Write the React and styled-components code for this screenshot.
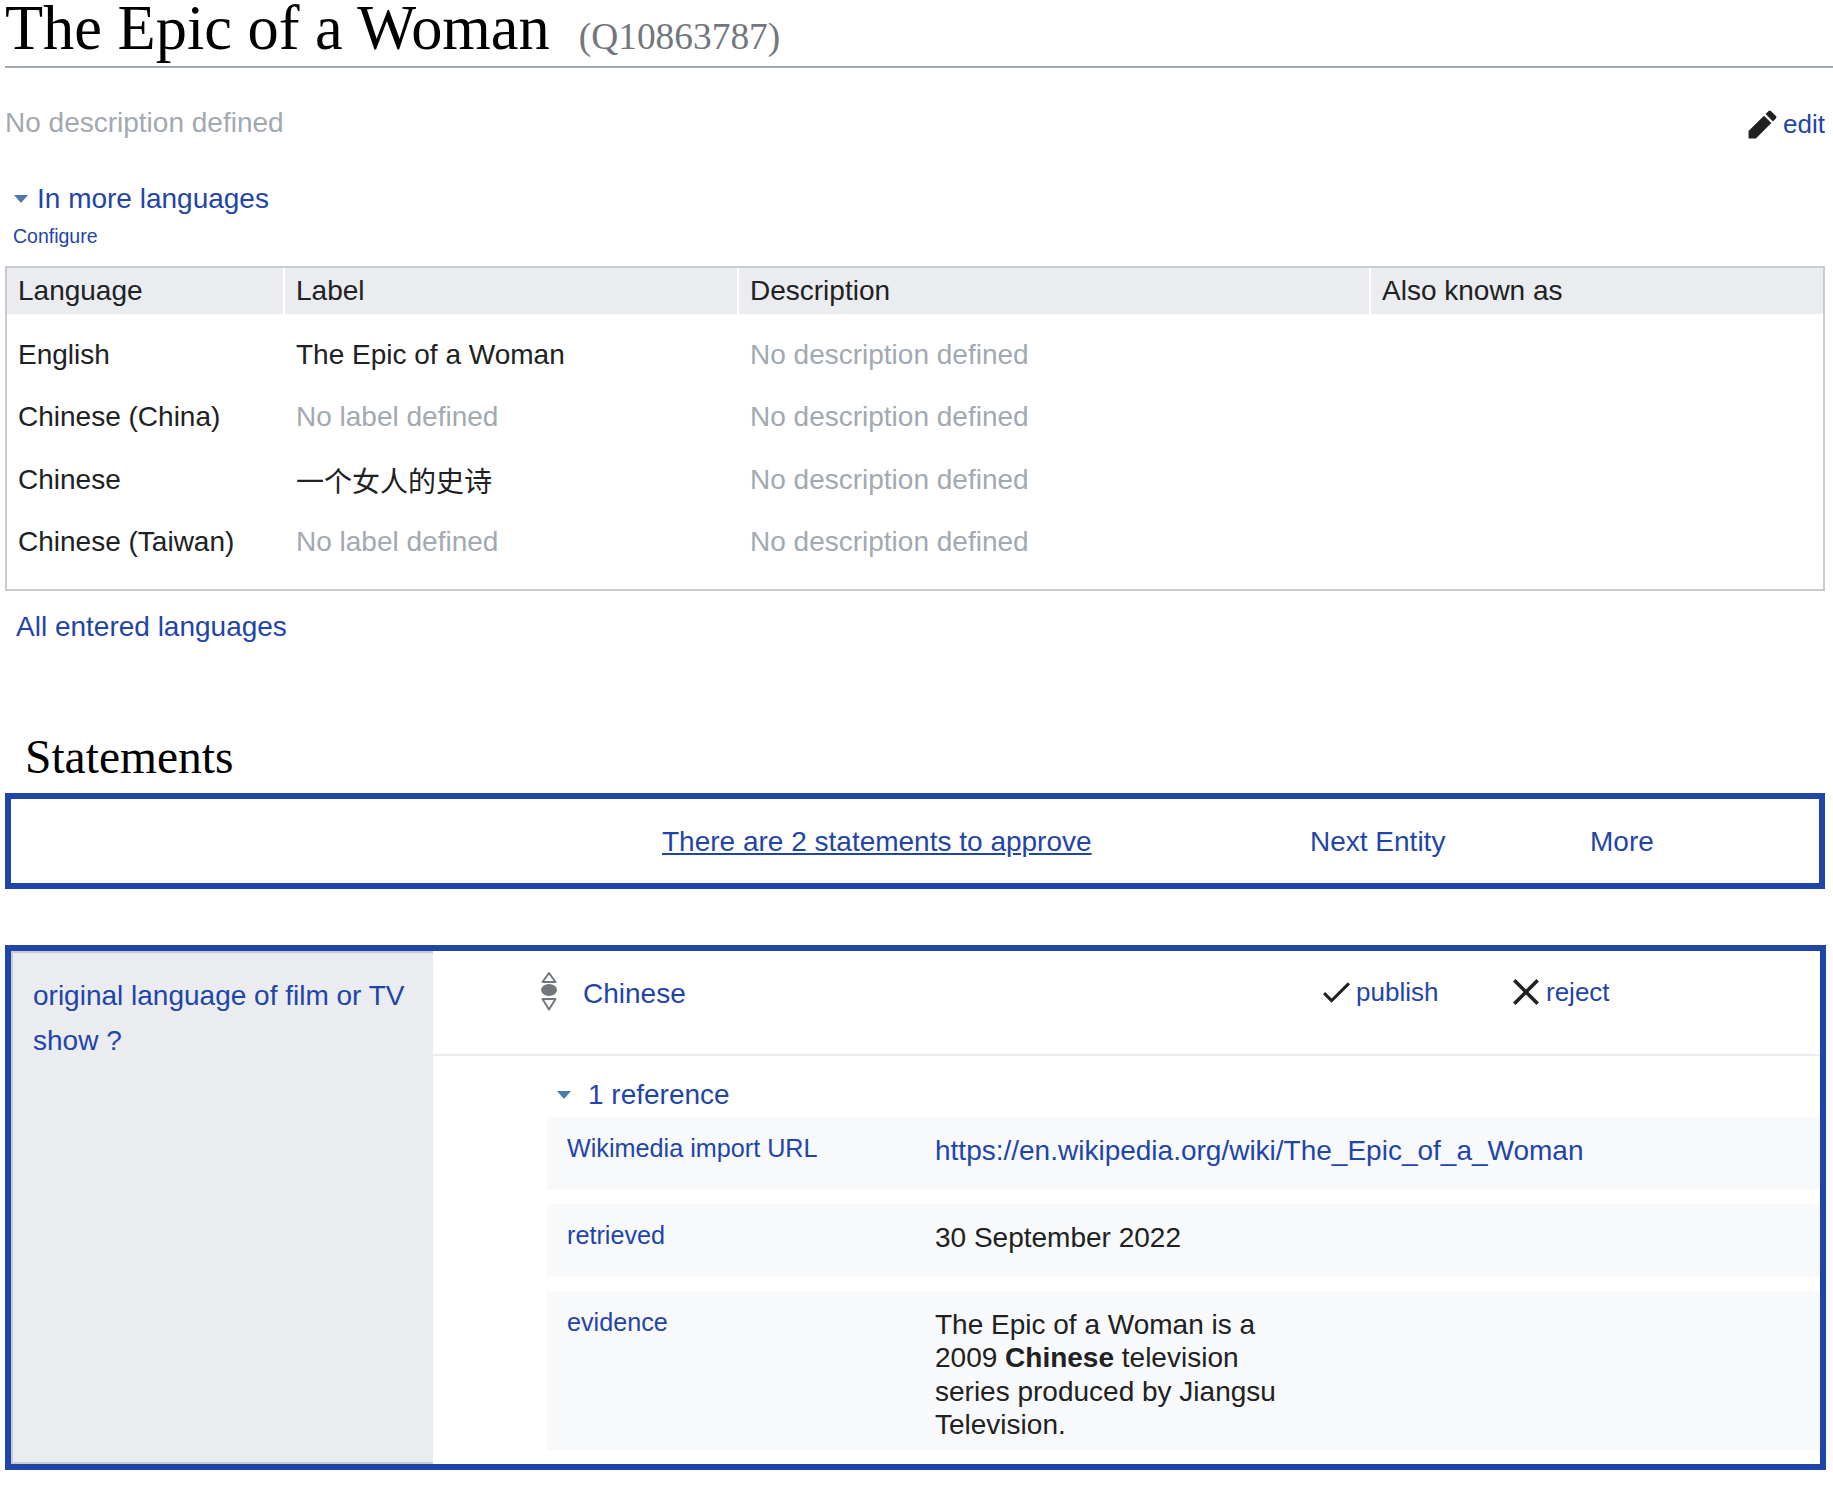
import React from 'react';
import styled, { createGlobalStyle } from 'styled-components';

const GlobalStyle = createGlobalStyle`
  html, body {
    margin: 0;
    padding: 0;
    background: #fff;
    color: #202122;
    font-family: "Liberation Sans", Arial, sans-serif;
  }
  * { box-sizing: border-box; }
`;

const BLUE = '#1f45a9';

const Page = styled.div`
  width: 1833px;
  height: 1485px;
  overflow: hidden;
  padding-left: 5px;
  font-size: 28px;
`;

const TitleBar = styled.h1`
  margin: 0;
  height: 68px;
  padding-bottom: 0;
  border-bottom: 2px solid #a2a9b1;
  font-family: "Liberation Serif", "Times New Roman", serif;
  font-weight: 400;
  font-size: 62.4px;
  line-height: 56px;
  color: #000;
  white-space: nowrap;
`;

const TitleId = styled.span`
  margin-left: 29px;
  font-size: 37.4px;
  color: #72777d;
`;

const DescriptionRow = styled.div`
  display: flex;
  justify-content: space-between;
  align-items: center;
  width: 1820px;
  margin-top: 37px;
  height: 36px;
`;

const Muted = styled.span`
  color: #a2a9b1;
`;

const Link = styled.a`
  color: ${BLUE};
  text-decoration: ${(p) => (p.$underline ? 'underline' : 'none')};
  font-size: ${(p) => p.$size || 'inherit'};
`;

const EditLink = styled.div`
  display: flex;
  align-items: center;
  gap: 5px;
  padding-top: 2px;
  font-size: 26px;
  color: ${BLUE};
`;

const Toggle = styled.div`
  display: flex;
  align-items: center;
  height: 34px;
  margin: ${(p) => p.$margin};
  color: ${BLUE};
  gap: ${(p) => p.$gap};
`;

const Caret = styled.span`
  width: 0;
  height: 0;
  border-left: 7px solid transparent;
  border-right: 7px solid transparent;
  border-top: 8px solid #4a78b0;
  margin-top: -1px;
`;

const ConfigureRow = styled.div`
  margin: 5px 0 0 8px;
  height: 26px;
  line-height: 26px;
`;

const LangTable = styled.table`
  width: 1820px;
  margin-top: 19px;
  table-layout: fixed;
  border-collapse: separate;
  border-spacing: 0;
  border: 2px solid #c8ccd1;
  padding-bottom: 15.5px;
`;

const HeadCell = styled.th`
  width: ${(p) => p.$width}px;
  height: 46px;
  padding: 0 0 0 11px;
  background: #eaecf0;
  border-right: ${(p) => (p.$last ? 'none' : '2px solid #fff')};
  font-weight: 400;
  text-align: left;
`;

const SpacerCell = styled.td`
  height: 9.5px;
  padding: 0;
`;

const Cell = styled.td`
  padding: 0 0 0 11px;
  height: 62.5px;
  font-family: "Liberation Sans", "Noto Sans CJK SC", sans-serif;
`;

const AllLanguages = styled.div`
  margin: 16px 0 0 11px;
  height: 40px;
  line-height: 40px;
`;

const StatementsTitle = styled.h2`
  margin: 85px 0 0 20px;
  height: 50px;
  font-family: "Liberation Serif", "Times New Roman", serif;
  font-weight: 400;
  font-size: 47.5px;
  line-height: 50px;
  color: #000;
`;

const ApproveBox = styled.div`
  display: flex;
  align-items: center;
  width: 1820px;
  height: 96px;
  margin-top: 11px;
  padding: 2px 0 0 651px;
  border: 6px solid ${BLUE};
`;

const ApproveLink = styled(Link)`
  width: ${(p) => p.$width}px;
`;

const ClaimBox = styled.div`
  display: flex;
  width: 1821px;
  height: 525px;
  margin-top: 56px;
  border: 6px solid ${BLUE};
`;

const PropertySide = styled.div`
  width: 422px;
  flex: none;
  padding: 20px 20px 0 20px;
  background: #eaecf0;
  border: solid #c8ccd1;
  border-width: 2px 0 2px 2px;
  color: ${BLUE};
  line-height: 45px;
`;

const ClaimBody = styled.div`
  flex: 1;
  min-width: 0;
`;

const MainRow = styled.div`
  display: flex;
  height: 105px;
  border-bottom: 2px solid #eaecf0;
  padding-left: 108px;
`;

const RankIcon = styled.svg`
  margin-top: 20px;
  width: 16px;
  height: 40px;
  flex: none;
`;

const MainValue = styled.div`
  width: 740px;
  margin: 26px 0 0 26px;
  color: ${BLUE};
  line-height: 34px;
`;

const ActionLink = styled.div`
  display: flex;
  align-items: center;
  gap: ${(p) => p.$gap}px;
  width: ${(p) => p.$width}px;
  height: 34px;
  margin-top: 24px;
  font-size: 26px;
  color: ${BLUE};
`;

const References = styled.div`
  padding-left: 114px;
`;

const ReferenceRow = styled.div`
  display: flex;
  min-height: ${(p) => p.$height}px;
  margin-bottom: 14px;
  background: #f8f9fa;
`;

const ReferenceProp = styled.div`
  width: 388px;
  flex: none;
  padding: 14px 0 0 20px;
  font-size: 25.2px;
  line-height: 34px;
  color: ${BLUE};
`;

const ReferenceValue = styled.div`
  padding-top: 17px;
  line-height: 33.3px;
`;

const Strong = styled.b`
  font-weight: 700;
`;

const langRows = [
  { lang: 'English', label: 'The Epic of a Woman' },
  { lang: 'Chinese (China)', label: null },
  { lang: 'Chinese', label: '一个女人的史诗' },
  { lang: 'Chinese (Taiwan)', label: null },
];

const PencilIcon = () => (
  <svg width="31" height="31" viewBox="0 0 20 20" fill="#202122">
    <path d="M16.77 8l1.94-2a1 1 0 0 0 0-1.41l-3.34-3.3a1 1 0 0 0-1.41 0L12 3.23zm-5.81-3.71L1 14.25V19h4.75l9.96-9.96z" />
  </svg>
);

const CheckIcon = () => (
  <svg width="27" height="21" viewBox="1.42 3.58 17.58 13.42" fill="#202122">
    <path d="M7 14.17 2.83 10l-1.41 1.41L7 17 19 5l-1.41-1.42z" />
  </svg>
);

const CloseIcon = () => (
  <svg width="26" height="26" viewBox="2.93 2.93 14.14 14.14" fill="#202122">
    <path d="m4.34 2.93 12.73 12.73-1.41 1.41L2.93 4.35z" />
    <path d="M17.07 4.34 4.34 17.07l-1.41-1.41L15.66 2.93z" />
  </svg>
);

export default function App() {
  return (
    <>
      <GlobalStyle />
      <Page>
        <TitleBar>
          The Epic of a Woman<TitleId>(Q10863787)</TitleId>
        </TitleBar>

        <DescriptionRow>
          <Muted>No description defined</Muted>
          <EditLink>
            <PencilIcon />
            edit
          </EditLink>
        </DescriptionRow>

        <Toggle $margin="41px 0 0 9px" $gap="9px">
          <Caret />
          In more languages
        </Toggle>
        <ConfigureRow>
          <Link $size="19.5px">Configure</Link>
        </ConfigureRow>

        <LangTable>
          <thead>
            <tr>
              <HeadCell $width={278}>Language</HeadCell>
              <HeadCell $width={454}>Label</HeadCell>
              <HeadCell $width={632}>Description</HeadCell>
              <HeadCell $last>Also known as</HeadCell>
            </tr>
          </thead>
          <tbody>
            <tr>
              <SpacerCell colSpan={4} />
            </tr>
            {langRows.map((row) => (
              <tr key={row.lang}>
                <Cell>{row.lang}</Cell>
                <Cell>{row.label || <Muted>No label defined</Muted>}</Cell>
                <Cell>
                  <Muted>No description defined</Muted>
                </Cell>
                <Cell />
              </tr>
            ))}
          </tbody>
        </LangTable>

        <AllLanguages>
          <Link>All entered languages</Link>
        </AllLanguages>

        <StatementsTitle>Statements</StatementsTitle>

        <ApproveBox>
          <ApproveLink $underline $width={648}>There are 2 statements to approve</ApproveLink>
          <ApproveLink $width={280}>Next Entity</ApproveLink>
          <ApproveLink $width={100}>More</ApproveLink>
        </ApproveBox>

        <ClaimBox>
          <PropertySide>original language of film or TV show ?</PropertySide>
          <ClaimBody>
            <MainRow>
              <RankIcon viewBox="0 0 16 40">
                <path d="M1.5 11 8 2l6.5 9z" fill="none" stroke="#72777d" strokeWidth="2" strokeLinejoin="round" />
                <ellipse cx="8" cy="19" rx="8" ry="6" fill="#72777d" />
                <path d="M1.5 28h13L8 38.5z" fill="none" stroke="#72777d" strokeWidth="2" strokeLinejoin="round" />
              </RankIcon>
              <MainValue>Chinese</MainValue>
              <ActionLink $gap={6} $width={190}>
                <CheckIcon />
                publish
              </ActionLink>
              <ActionLink $gap={7}>
                <CloseIcon />
                reject
              </ActionLink>
            </MainRow>
            <References>
              <Toggle $margin="22px 0 5px 10px" $gap="17px">
                <Caret />1 reference
              </Toggle>
              <ReferenceRow $height={73}>
                <ReferenceProp>Wikimedia import URL</ReferenceProp>
                <ReferenceValue>
                  <Link>https://en.wikipedia.org/wiki/The_Epic_of_a_Woman</Link>
                </ReferenceValue>
              </ReferenceRow>
              <ReferenceRow $height={73}>
                <ReferenceProp>retrieved</ReferenceProp>
                <ReferenceValue>30 September 2022</ReferenceValue>
              </ReferenceRow>
              <ReferenceRow $height={159}>
                <ReferenceProp>evidence</ReferenceProp>
                <ReferenceValue>
                  The Epic of a Woman is a<br />
                  2009 <Strong>Chinese</Strong> television<br />
                  series produced by Jiangsu<br />
                  Television.
                </ReferenceValue>
              </ReferenceRow>
            </References>
          </ClaimBody>
        </ClaimBox>
      </Page>
    </>
  );
}
